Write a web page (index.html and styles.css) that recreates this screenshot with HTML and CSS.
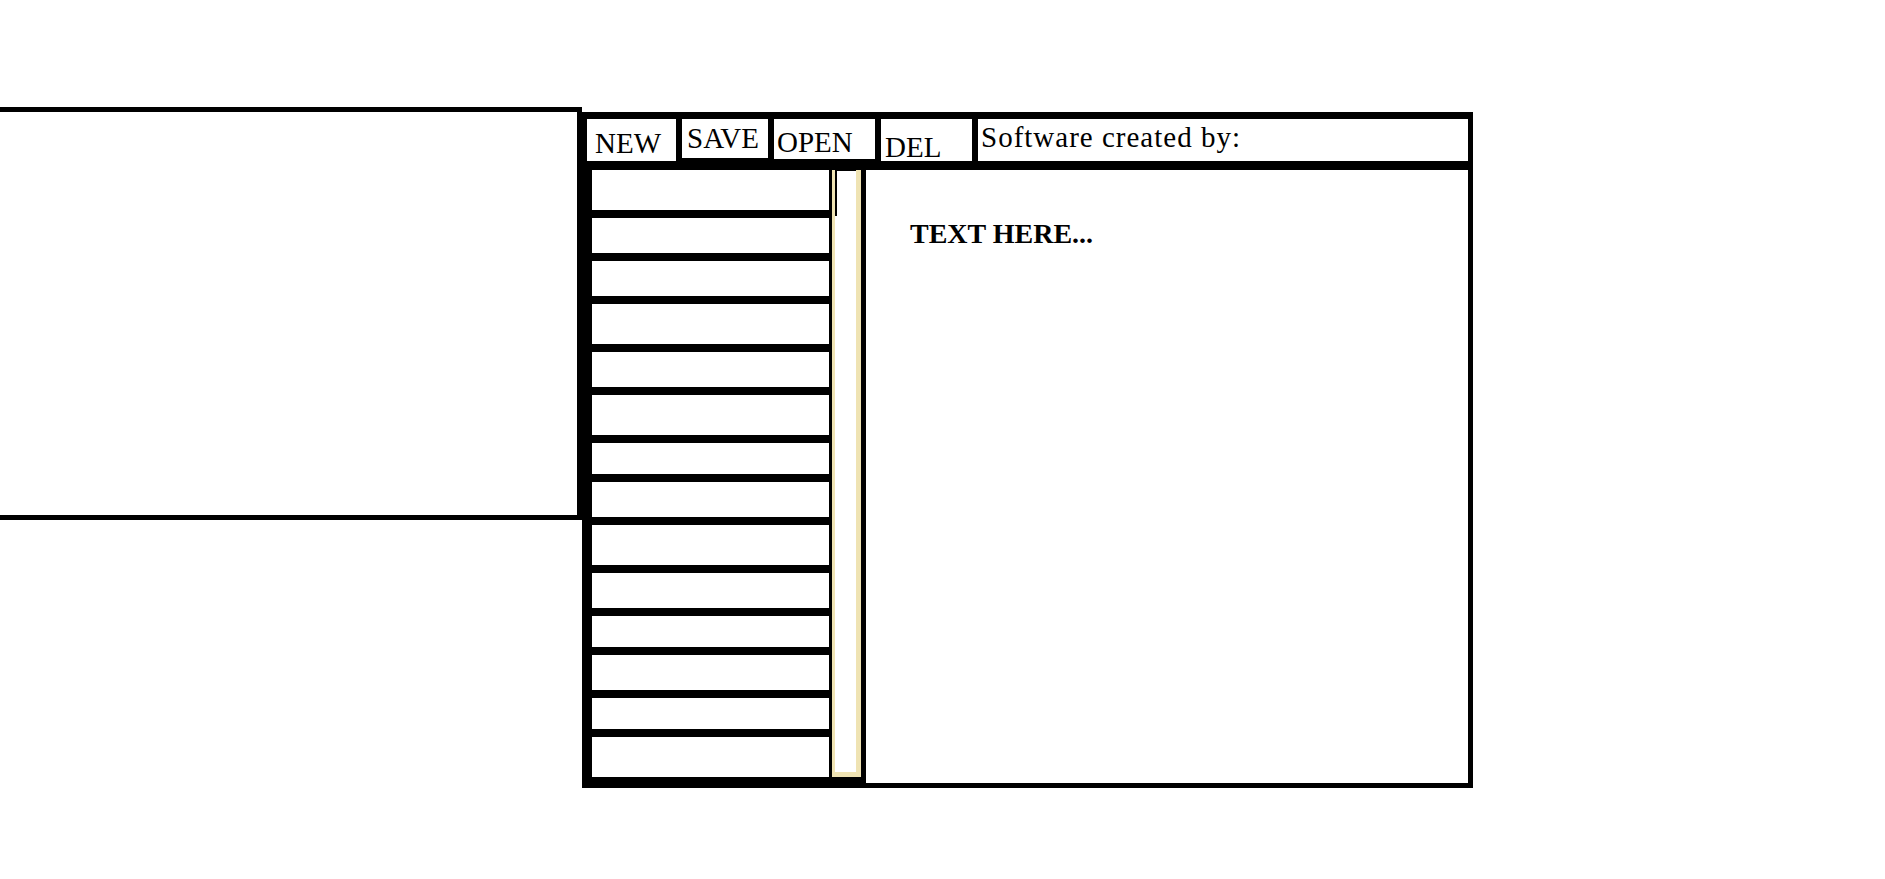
FILE: index.html
```html
<!DOCTYPE html>
<html lang="en">
<head>
  <meta charset="UTF-8" />
  <meta name="viewport" content="width=device-width, initial-scale=1.0"/>
  <title>Notes</title>
  <link rel="stylesheet" href="styles.css">
</head>
<body>
  <div class="page">
    <div class="side-panel"></div>

    <div class="window">
      <div class="toolbar">
        <div class="tool tool-new">NEW</div>
        <div class="tool tool-save">SAVE</div>
        <div class="tool tool-open">OPEN</div>
        <div class="tool tool-del">DEL</div>
        <div class="credits">Software created by:</div>
      </div>

      <div class="workspace">
        <div class="file-list">
          <div class="files">
            <div class="file file-l"></div>
            <div class="file file-m"></div>
            <div class="file file-m"></div>
            <div class="file file-l"></div>
            <div class="file file-m"></div>
            <div class="file file-l"></div>
            <div class="file file-s"></div>
            <div class="file file-m"></div>
            <div class="file file-l"></div>
            <div class="file file-m"></div>
            <div class="file file-s"></div>
            <div class="file file-m"></div>
            <div class="file file-s"></div>
            <div class="file file-last"></div>
          </div>
          <div class="scrollbar">
            <div class="thumb"></div>
          </div>
        </div>

        <div class="editor">
          <p class="editor-text">TEXT HERE...</p>
        </div>
      </div>
    </div>
  </div>
</body>
</html>
```

FILE: styles.css
```css
* {
  box-sizing: border-box;
}

body {
  margin: 0;
  padding: 0;
  background: #fff;
  color: #000;
  font-family: 'Liberation Serif', 'Times New Roman', serif;
}

.page {
  display: flex;
  align-items: flex-start;
  padding-top: 107px;
}

/* empty panel on the left */
.side-panel {
  width: 582px;
  height: 413px;
  border-top: 5px solid #000;
  border-bottom: 5px solid #000;
  border-right: 5px solid #000;
}

.window {
  width: 891px;
  height: 676px;
  margin-top: 5px;
  border: 5px solid #000;
  display: flex;
  flex-direction: column;
}

/* top buttons */
.toolbar {
  display: flex;
  align-items: flex-start;
  gap: 6px;
  height: 53px;
  padding-top: 2px;
  background: #000;
}

.tool,
.credits {
  background: #fff;
  height: 42px;
  font-size: 29px;
  line-height: 1;
  white-space: nowrap;
}

.tool-new {
  width: 89px;
  padding: 10px 0 0 8px;
}

.tool-save {
  width: 86px;
  height: 39px;
  padding: 5px 0 0 5px;
}

.tool-open {
  width: 101px;
  height: 40px;
  padding: 9px 0 0 3px;
}

.tool-del {
  width: 91px;
  padding: 14px 0 0 4px;
}

.credits {
  flex: 1;
  padding: 4px 0 0 3px;
  letter-spacing: 1px;
}

.workspace {
  flex: 1;
  display: flex;
}

/* file list + its scrollbar */
.file-list {
  display: flex;
  background: #000;
  padding-bottom: 6px;
}

.files {
  width: 245px;
  display: flex;
  flex-direction: column;
  gap: 8px;
  padding: 0 3px 0 5px;
}

.file {
  background: #fff;
}

.file-l {
  height: 40px;
}

.file-m {
  height: 35px;
}

.file-s {
  height: 31px;
}

.file-last {
  flex: 1;
}

.scrollbar {
  width: 29px;
  background: #fff;
  border-left: 3px solid #efe3b3;
  border-right: 5px solid #efe3b3;
  border-bottom: 5px solid #efe3b3;
}

.thumb {
  height: 46px;
  border-top: 1px solid #000;
  border-left: 2px solid #000;
}

.editor {
  flex: 1;
  background: #fff;
  border-left: 5px solid #000;
  padding: 48px 0 0 44px;
}

.editor-text {
  margin: 0;
  font-size: 28px;
  font-weight: bold;
  line-height: 31px;
}
```
